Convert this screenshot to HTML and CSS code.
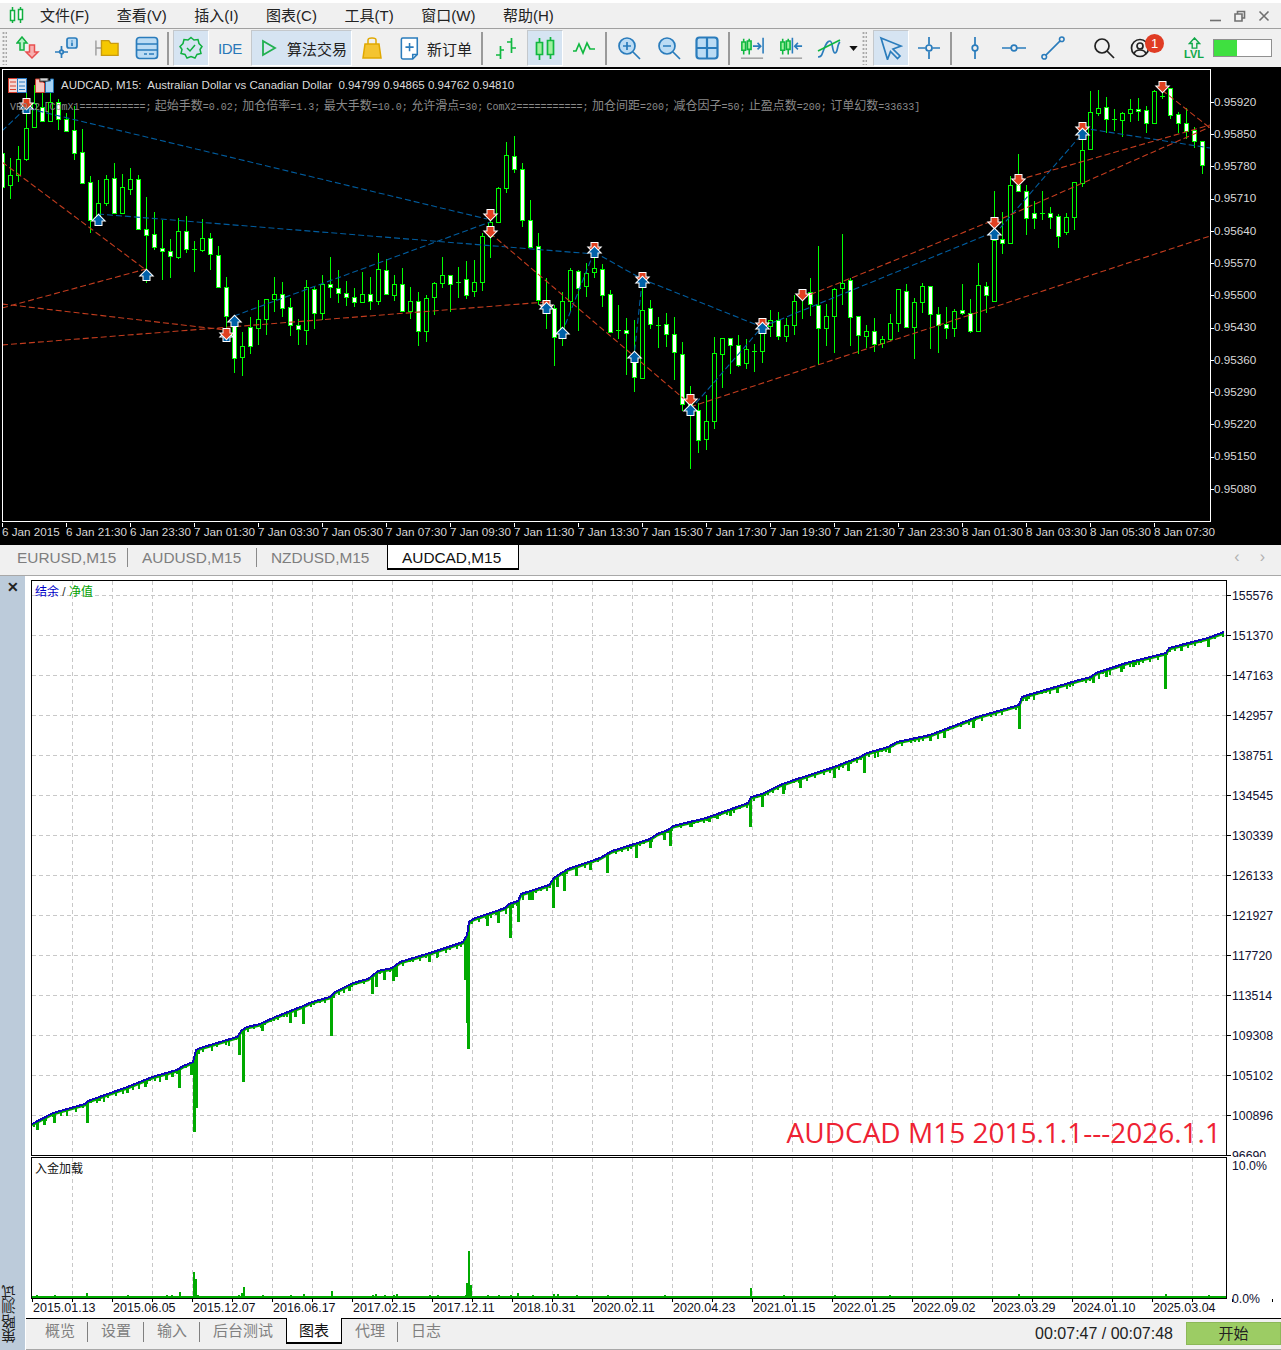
FILE: index.html
```html
<!DOCTYPE html>
<html lang="zh">
<head>
<meta charset="utf-8">
<title>MetaTrader</title>
<link rel="stylesheet" href="styles.css">
</head>
<body>
<header class="menubar">
  <svg class="app-icon" viewBox="0 0 15 18"><path class="s-green" d="M3.5 1v16M11.5 1v16"/><path class="s-green f-white" d="M1.5 4.500h4v10h-4zM9.500 3.500h4v10h-4z"/></svg>
  <nav class="menu"><span>文件(F)</span><span>查看(V)</span><span>插入(I)</span><span>图表(C)</span><span>工具(T)</span><span>窗口(W)</span><span>帮助(H)</span></nav>
  <div class="winctl">
    <svg viewBox="0 0 12 12"><path class="s-win" d="M0 10.500h11"/></svg>
    <svg viewBox="0 0 12 12"><path class="s-win" d="M1 4h7v7H1zM3.500 4V1.500h7v6.500H8"/></svg>
    <svg viewBox="0 0 12 12"><path class="s-win" d="M1.500 1.500l9 9M10.500 1.500l-9 9"/></svg>
  </div>
</header>

<div class="toolbar">
  <i class="grip"></i>
  <button class="tb w39"><svg viewBox="0 0 24 24"><path class="s-green f-lgreen" d="M6 1L1 7h3v7h4V7h3z"/><path class="s-red f-lred" d="M16 22l-6-6h3.500V9h5v7H22z"/></svg></button>
  <button class="tb w40"><svg viewBox="0 0 24 24"><rect class="s-blue f-lblue" x="12" y="2" width="10" height="10" rx="2"/><path class="s-blue" d="M17 4.500v1M17 6.500v3.500M0 16h13M6.500 10v12"/><circle class="s-blue f-grey" cx="6.500" cy="16" r="1.800"/></svg></button>
  <button class="tb w40"><svg viewBox="0 0 26 24"><path class="s-grey" d="M1 4v16M1 12h6"/><path class="s-gold f-gold" d="M7 4h8l2 3h8v13H7z"/></svg></button>
  <button class="tb w39"><svg viewBox="0 0 24 24"><rect class="s-blue f-lblue" x="1.500" y="1.500" width="21" height="21" rx="3"/><path class="s-blue" d="M1.500 8h21M1.500 14h21M9 18h3M14 18h5"/></svg></button>
  <i class="sep sep-a"></i>
  <button class="tb w36 on"><svg viewBox="0 0 24 24"><path class="s-green" d="M12 1.500l3 2.500 4-.5 1 4 3 3-2 3 1 4-4 1-2 3.500-4-1.500-4 1.500-2-3.500-4-1 1-4-2-3 3-3 1-4 4 .5z"/><path class="s-green" d="M8 12l3 3 5-6"/></svg></button>
  <button class="tb w42 ide">IDE</button>
  <button class="tb w101 on algo"><svg viewBox="0 0 16 18"><path class="s-play" d="M2 2l12 7-12 7z"/></svg><span>算法交易</span></button>
  <button class="tb w39"><svg viewBox="0 0 24 24"><path class="s-bag" d="M8 9V4q0-2 4-2t4 2v5"/><path class="s-bag f-bag" d="M5 8h14l2 14H3z"/></svg></button>
  <button class="tb w87 neworder"><svg viewBox="0 0 22 26"><path class="s-blue f-white" d="M3 1.500h16v18l-5 5H3q-1.500 0-1.500-1.500V3Q1.500 1.500 3 1.500z"/><path class="s-blue" d="M14 24.500v-5h5M10.500 7v9M6 11.500h9"/></svg><span>新订单</span></button>
  <i class="sep sep-b"></i>
  <button class="tb w39 m2"><svg viewBox="0 0 24 24"><path class="s-cgreen" d="M6.500 10v13M2 19h4.500M6.500 14H10M17.500 2v15M13 6h4.500M17.500 12H22"/></svg></button>
  <button class="tb w36 on"><svg viewBox="0 0 24 24"><path class="s-cgreen" d="M6.500 2v22M17.500 1v22"/><path class="s-cgreen f-lime" d="M3.500 6.500h6v12h-6zM14.500 4.500h6v14h-6z"/></svg></button>
  <button class="tb w42"><svg viewBox="0 0 24 24"><path class="s-cgreen" d="M1 15h3l3-7 4 9 4-10 3 6h5"/></svg></button>
  <i class="sep sep-c"></i>
  <button class="tb w40"><svg viewBox="0 0 24 24"><circle class="s-blue f-lblue" cx="10" cy="10" r="8"/><path class="s-blue" d="M16 16l7 7M6 10h8M10 6v8"/></svg></button>
  <button class="tb w39"><svg viewBox="0 0 24 24"><circle class="s-blue f-lblue" cx="10" cy="10" r="8"/><path class="s-blue" d="M16 16l7 7M6 10h8"/></svg></button>
  <button class="tb w38"><svg viewBox="0 0 24 24"><rect class="s-blue2 f-lblue" x="1.500" y="1.500" width="21" height="21" rx="3"/><path class="s-blue2" d="M12 1.500v21M1.500 12h21"/></svg></button>
  <i class="sep sep-d"></i>
  <button class="tb w40"><svg viewBox="0 0 26 26"><path class="s-cgreen" d="M4 3v17M10 3v17"/><path class="s-cgreen f-lime" d="M2 6.500h4v9H2zM8 5.500h4v9H8z"/><path class="s-blue" d="M14 11h8M19 7.500l3.500 3.500-3.500 3.500M25 2v17"/><path class="s-grey" d="M1 24h24"/></svg></button>
  <button class="tb w38"><svg viewBox="0 0 26 26"><path class="s-cgreen" d="M4 3v17M10 3v17"/><path class="s-cgreen f-lime" d="M2 6.500h4v9H2zM8 5.500h4v9H8z"/><path class="s-blue" d="M25 11h-8M20.500 7.500L17 11l3.500 3.500M14.500 2v17"/><path class="s-grey" d="M1 24h24"/></svg></button>
  <button class="tb w38"><svg viewBox="0 0 24 24"><path class="s-blue" d="M1 21c4 0 4-3 6-8s3-8 6-8 2 12 5 12 2-9 5-11"/><path class="s-cgreen" d="M1 15l22-11"/></svg></button>
  <button class="tb w11"><svg class="drop" viewBox="0 0 10 6"><path class="f-black" d="M0 0h10L5 6z"/></svg></button>
  <i class="grip grip-b"></i>
  <button class="tb w36 on"><svg viewBox="0 0 24 24"><path class="s-blue" d="M2 2l20 8-8 3 7 7-2.500 2.500-7-7-3 8z"/></svg></button>
  <button class="tb w40"><svg viewBox="0 0 24 24"><path class="s-blue" d="M1 12h7.500M15.500 12H23M12 1v7.500M12 15.500V23"/><circle class="s-blue" cx="12" cy="12" r="3"/></svg></button>
  <i class="sep sep-e"></i>
  <button class="tb w40"><svg viewBox="0 0 24 24"><path class="s-blue" d="M12 1v8M12 15v8"/><circle class="s-blue" cx="12" cy="12" r="2.800"/></svg></button>
  <button class="tb w38"><svg viewBox="0 0 24 24"><path class="s-blue" d="M0 12h9M15 12h9"/><circle class="s-blue" cx="12" cy="12" r="2.800"/></svg></button>
  <button class="tb w40"><svg viewBox="0 0 26 26"><path class="s-blue" d="M5 21L21 5"/><circle class="s-blue" cx="3.500" cy="22.500" r="2.500"/><circle class="s-blue" cx="22.500" cy="3.500" r="2.500"/></svg></button>
  <button class="tb w38 ml12"><svg viewBox="0 0 24 24"><circle class="s-black" cx="10" cy="10" r="7"/><path class="s-black" d="M15 15l7 7"/></svg></button>
  <button class="tb w40 acct"><svg viewBox="0 0 24 24"><circle class="s-black" cx="11" cy="12" r="8.500"/><circle class="s-black" cx="11" cy="10" r="3"/><path class="s-black" d="M5 18q1-4 6-4t6 4"/></svg><b class="badge">1</b></button>
  <button class="tb w38 ml12 lvl"><svg viewBox="0 0 14 13"><path class="s-lvl" d="M7 1L1.500 7H4.500v5h5V7h3z"/></svg><span>LVL</span></button>
  <div class="meter"><div class="meter-fill"></div></div>
</div>

<main class="chart">
  <div class="plot">
    <svg id="plot" class="plot-svg" viewBox="3 70 1207 451">
      <defs>
        <g id="ar-up"><path class="ar ar-b" d="M0-5.500L5.500 0H3V4.500H-3V0H-5.500z"/></g>
        <g id="ar-dn"><path class="ar ar-r" d="M0 5.500L5.500 0H3V-4.500H-3V0H-5.500z"/></g>
      </defs>
      <path id="wicks" class="wick"/>
      <path id="hollow" class="body-h"/>
      <path id="solid" class="body-w"/>
      <path id="doji" class="wick"/>
      <path class="dash-b" d="M2 131L26 108L487 219M98 214L594 254M234 316L490 222M562 333L594 252M594 252L642 279L762 327M642 282L634 357M690 410L762 327M762 327L994 232M994 235L1082 134M1082 128L1210 148"/>
      <path class="dash-r" d="M2 162L146 270M2 308L146 269M2 304L226 330M2 345L546 302M490 233L690 404M690 407L1210 236M802 298L994 220M1018 180L1210 125M994 222L1210 127M1162 90L1210 128"/>
      <g id="arrows"></g>
    </svg>
    <div class="plot-title">
      <svg class="pi" viewBox="0 0 19 15"><rect class="pi-red" x=".5" y=".5" width="9" height="14"/><rect class="pi-blue" x="9.500" y=".5" width="9" height="14"/><path class="pi-r" d="M2 4h6M2 8h6M2 11.500h6"/><path class="pi-b" d="M11 4h6M11 8h6M11 11.500h6"/></svg>
      <svg class="pi pi2" viewBox="0 0 19 15"><path class="f-pink" d="M.5 1h4v3h3l2 1v9.500H.5z"/><path class="f-sky" d="M10.500 4l2-1h3V1h3v13.500h-8z"/><rect class="f-wgrey" x="5" y="0" width="8" height="3"/></svg>
      <span>AUDCAD, M15:&nbsp; Australian Dollar vs Canadian Dollar&nbsp; 0.94799 0.94865 0.94762 0.94810</span>
    </div>
    <div class="plot-note">VR9.2 [ComX1===========; <b>起始手数</b>=0.02; <b>加仓倍率</b>=1.3; <b>最大手数</b>=10.0; <b>允许滑点</b>=30; ComX2===========; <b>加仓间距</b>=200; <b>减仓因子</b>=50; <b>止盈点数</b>=200; <b>订单幻数</b>=33633]</div>
  </div>
  <div class="prices"><span>0.95920</span><span>0.95850</span><span>0.95780</span><span>0.95710</span><span>0.95640</span><span>0.95570</span><span>0.95500</span><span>0.95430</span><span>0.95360</span><span>0.95290</span><span>0.95220</span><span>0.95150</span><span>0.95080</span></div>
  <div class="times"><span>6 Jan 2015</span><span>6 Jan 21:30</span><span>6 Jan 23:30</span><span>7 Jan 01:30</span><span>7 Jan 03:30</span><span>7 Jan 05:30</span><span>7 Jan 07:30</span><span>7 Jan 09:30</span><span>7 Jan 11:30</span><span>7 Jan 13:30</span><span>7 Jan 15:30</span><span>7 Jan 17:30</span><span>7 Jan 19:30</span><span>7 Jan 21:30</span><span>7 Jan 23:30</span><span>8 Jan 01:30</span><span>8 Jan 03:30</span><span>8 Jan 05:30</span><span>8 Jan 07:30</span></div>
</main>

<div class="symtabs">
  <span class="symtab">EURUSD,M15</span><span class="symtab">AUDUSD,M15</span><span class="symtab nosep">NZDUSD,M15</span><span class="symtab active">AUDCAD,M15</span>
  <div class="symnav"><span>‹</span><span>›</span></div>
</div>

<section class="tester">
  <aside class="side"><span class="close">✕</span><span class="side-title">策略测试</span></aside>
  <div class="tester-main">
    <div class="graph">
      <div class="row row-main">
        <div class="pane pane-main">
          <svg class="pane-svg" viewBox="32 581 1194 574">
            <defs><clipPath id="under"><polygon id="underpoly"/></clipPath></defs>
            <path id="grid1" class="grid"/>
            <g clip-path="url(#under)">
              <path id="teeth" class="teeth"/>
              <path id="spikes" class="spike"/>
              <polyline id="eq" class="eq"/>
            </g>
            <polyline id="bal" class="bal"/>
          </svg>
          <div class="legend"><span class="lg-b">结余</span> <span class="lg-s">/</span> <span class="lg-g">净值</span></div>
          <div class="wm">AUDCAD M15 2015.1.1---2026.1.1</div>
        </div>
        <div class="yaxis"><span>155576</span><span>151370</span><span>147163</span><span>142957</span><span>138751</span><span>134545</span><span>130339</span><span>126133</span><span>121927</span><span>117720</span><span>113514</span><span>109308</span><span>105102</span><span>100896</span><span>96690</span></div>
      </div>
      <div class="row row-load">
        <div class="pane pane-load">
          <svg class="pane-svg" viewBox="32 1158 1194 140">
            <path id="grid2" class="grid"/>
            <path id="load" class="loadbar"/>
            <path class="loadbase" d="M32 1297H1226"/>
          </svg>
          <div class="legend legend-k">入金加载</div>
        </div>
        <div class="yaxis2"><span>10.0%</span><span>0.0%</span></div>
      </div>
      <div class="dates"><span>2015.01.13</span><span>2015.06.05</span><span>2015.12.07</span><span>2016.06.17</span><span>2017.02.15</span><span>2017.12.11</span><span>2018.10.31</span><span>2020.02.11</span><span>2020.04.23</span><span>2021.01.15</span><span>2022.01.25</span><span>2022.09.02</span><span>2023.03.29</span><span>2024.01.10</span><span>2025.03.04</span></div>
    </div>
    <footer class="bottom">
      <div class="btabs"><span class="btab">概览</span><span class="btab">设置</span><span class="btab">输入</span><span class="btab nosep">后台测试</span><span class="btab active">图表</span><span class="btab">代理</span><span class="btab nosep">日志</span></div>
      <div class="timer">00:07:47 / 00:07:48</div>
      <button class="start">开始</button>
    </footer>
  </div>
</section>
<script src="charts.js"></script>
</body>
</html>
```
FILE: styles.css
```css
* { box-sizing: border-box; }
html, body { margin: 0; padding: 0; background: #fff; }
body { width: 1281px; height: 1350px; overflow: hidden; font-family: "Liberation Sans", "Noto Sans CJK SC", sans-serif; color: #222; }
svg { display: block; }

.menubar { margin-top: 3px; height: 26px; background: #f0f0f0; border-bottom: 1px solid #a0a0a0; display: flex; align-items: center; padding-left: 9px; }
.app-icon { width: 15px; height: 18px; margin-right: 16px; margin-bottom: 2px; }
.menu { display: flex; gap: 27.600px; font-size: 15px; color: #222; padding-bottom: 2px; }
.winctl { margin-left: auto; display: flex; gap: 12px; padding-right: 11px; }
.winctl svg { width: 12px; height: 12px; }
.s-win { fill: none; stroke: #707070; stroke-width: 1.6; }

.toolbar { height: 38px; background: #f0f0f0; display: flex; align-items: stretch; }
.grip { width: 5px; margin: 2px 1px 2px 2px; background: radial-gradient(circle, #a8a8a8 1px, transparent 1.2px) 0 0 / 3px 4px; }
.grip-b { margin: 2px 6px 2px 3px; }
.tb { flex: none; padding: 0; margin: 1px 0; border: 0; background: none; display: flex; align-items: center; justify-content: center; font: inherit; color: #222; position: relative; }
.tb svg { width: 24px; height: 24px; }
.tb.on { background: #d6e4f2; border: 1px solid #c4c8cc; border-right-color: #fff; border-bottom-color: #fff; }
.w11 { width: 11px; } .w36 { width: 36px; } .w38 { width: 38px; } .w39 { width: 39px; } .w40 { width: 40px; } .w42 { width: 42px; } .w87 { width: 87px; } .w101 { width: 101px; }
.m2 { margin-right: 2px; }
.ml12 { margin-left: 12px; }
.sep { flex: none; width: 2px; margin: 3px 0 2px; background: #9a9a9a; }
.sep-a { margin-left: 1px; margin-right: 4px; }
.sep-b { margin-left: 3px; margin-right: 3px; }
.sep-c { margin-left: 0; margin-right: 2px; }
.sep-d { margin-left: 2px; margin-right: 2px; }
.sep-e { margin-left: 1px; margin-right: 3px; }
.ide { font-size: 15px; color: #2a78b8; letter-spacing: -.3px; }
.algo { justify-content: flex-start; padding-left: 9px; font-size: 15px; }
.algo svg { width: 16px; height: 18px; margin-right: 10px; }
.neworder { justify-content: flex-start; padding-left: 9px; font-size: 15px; }
.neworder svg { width: 20px; height: 25px; margin-right: 7px; }
.tb .drop { width: 9px; height: 5px; }
.acct svg { width: 24px; height: 24px; margin-right: 4px; }
.badge { position: absolute; left: 22px; top: 4px; width: 19px; height: 19px; border-radius: 50%; background: #e03c24; color: #fff; font-weight: normal; font-size: 13px; line-height: 19px; text-align: center; }
.lvl { flex-direction: column; font-size: 11px; font-weight: bold; color: #10a848; line-height: 11px; }
.tb.lvl svg { width: 13px; height: 12px; }
.meter { flex: none; width: 59px; height: 18px; align-self: center; margin-top: 0; border: 1px solid #909090; background: #fff; }
.meter-fill { width: 40%; height: 100%; background: #3fe040; }

.s-green, .s-red, .s-blue, .s-blue2, .s-grey, .s-gold, .s-bag, .s-cgreen, .s-black, .s-play, .s-lvl { fill: none; stroke-width: 1.500; }
.s-green { stroke: #10b040; }
.s-cgreen { stroke: #10b840; stroke-width: 1.700; }
.s-play { stroke: #20b050; stroke-width: 1.800; }
.s-red { stroke: #e85050; }
.s-blue { stroke: #2a7cbc; stroke-width: 1.700; }
.s-blue2 { stroke: #2a7cbc; stroke-width: 2.200; }
.s-grey { stroke: #9a9a9a; }
.s-gold { stroke: #c89a10; }
.s-bag { stroke: #e0a800; }
.s-black { stroke: #222; stroke-width: 1.700; }
.s-lvl { stroke: #10a848; }
.f-white { fill: #fff; }
.f-lgreen { fill: #b8f0c8; }
.f-lred { fill: #f8b0b0; }
.f-lblue { fill: #bcdcf4; }
.f-gold { fill: #f6c800; }
.f-bag { fill: #f4c430; }
.f-lime { fill: #a0f0a0; }
.f-grey { fill: #c8d8e8; }
.f-black { fill: #111; }
.f-pink { fill: #f8c8c0; stroke: #d04030; stroke-width: 1; }
.f-sky { fill: #a8d4f4; stroke: #2070b0; stroke-width: 1; }
.f-wgrey { fill: #d8d8d8; stroke: #555; stroke-width: 1; }

.chart { height: 478px; background: #000; display: grid; grid-template-columns: 1211px 70px; grid-template-rows: 455px 23px; overflow: hidden; padding-top: 2px; }
.plot { position: relative; margin-left: 2px; border: 1px solid #fff; width: 1209px; height: 453px; }
.plot-svg { width: 1207px; height: 451px; }
.wick { fill: none; stroke: #00ff00; stroke-width: 1; shape-rendering: crispEdges; }
.body-h { fill: #000; stroke: #00ff00; stroke-width: 1; shape-rendering: crispEdges; }
.body-w { fill: #fff; stroke: #00ff00; stroke-width: 1; shape-rendering: crispEdges; }
.dash-b { fill: none; stroke: #005c9e; stroke-width: 1.100; stroke-dasharray: 6 3; }
.dash-r { fill: none; stroke: #c23c1e; stroke-width: 1.100; stroke-dasharray: 6 3; }
.ar { stroke: #fff; stroke-width: 2; paint-order: stroke; stroke-linejoin: miter; }
.ar-b { fill: #0060a8; }
.ar-r { fill: #e04020; }
.plot-title { position: absolute; left: 5px; top: 7px; height: 16px; display: flex; align-items: center; color: #dcdcdc; font-size: 11.500px; white-space: pre; }
.pi { width: 19px; height: 15px; margin-right: 8px; }
.pi2 { margin-right: 7px; }
.pi-red { fill: #f4d8d4; stroke: #d84030; }
.pi-blue { fill: #d4e4f4; stroke: #2878c0; }
.pi-r { stroke: #d84030; stroke-width: 1; fill: none; }
.pi-b { stroke: #2878c0; stroke-width: 1; fill: none; }
.plot-note { position: absolute; left: 7px; top: 28px; font: 10px/14px "Liberation Mono", "Noto Sans CJK SC", monospace; color: #8a8a8a; white-space: pre; word-spacing: -2.600px; }
.plot-note b { font: 12px/14px "Noto Sans CJK SC", sans-serif; }

.prices { display: flex; flex-direction: column; padding-top: 16.700px; color: #d8d8d8; font-size: 11.700px; grid-row: 1; grid-column: 2; }
.prices span { flex: none; height: 32.250px; line-height: 32.250px; padding-left: 3px; position: relative; margin-top: 0; }
.prices span::before { content: ""; position: absolute; left: -1px; top: 50%; width: 4px; height: 1px; background: #fff; }
.times { grid-column: 1 / 3; display: flex; padding-left: 2px; font-size: 11.700px; color: #d8d8d8; }
.times span { flex: none; width: 64px; height: 21px; padding-top: 1px; line-height: 14px; white-space: nowrap; position: relative; }
.times span::before { content: ""; position: absolute; left: 0; top: -1px; width: 1px; height: 4px; background: #fff; }

.symtabs { height: 31px; background: #f0f0f0; border-bottom: 1px solid #a8a8a8; display: flex; padding-left: 3px; font-size: 15.400px; }
.symtab { flex: none; width: 129px; height: 25px; padding-left: 14px; line-height: 26px; color: #7e7e7e; position: relative; white-space: nowrap; }
.symtab:first-child { width: 125px; }
.symtab.nosep { width: 130px; }
.symtab::after { content: ""; position: absolute; right: 0; top: 3px; bottom: 3px; width: 1px; background: #8a8a8a; }
.symtab.nosep::after, .symtab.active::after, .btab.nosep::after, .btab.active::after { display: none; }
.symtab.active { background: #fff; color: #111; border: 1px solid #000; border-top: 0; border-bottom-width: 2px; padding-left: 14px; width: 132px; }
.symnav { margin-left: auto; display: flex; gap: 20px; padding: 0 16px 6px 0; color: #b0b0b0; font-size: 16px; align-items: center; }

.tester { height: 774px; display: flex; }
.side { flex: none; width: 25px; background: #bccbda; display: flex; flex-direction: column; justify-content: space-between; align-items: center; padding-bottom: 7px; }
.close { font-size: 14px; font-weight: bold; color: #222; line-height: 22px; margin-left: 1px; }
.side-title { writing-mode: vertical-rl; transform: rotate(180deg); font-size: 14.500px; line-height: 18px; margin-right: 6px; color: #222; }
.tester-main { flex: 1; min-width: 0; display: flex; flex-direction: column; }
.graph { padding: 4px 0 0 6px; height: 742px; }
.row { display: flex; }
.row-main { height: 577px; overflow: hidden; }
.row-load { height: 142px; }
.pane { flex: none; width: 1196px; border: 1px solid #000; position: relative; }
.pane-main { height: 576px; }
.pane-load { height: 142px; }
.pane-svg { width: 1194px; height: 100%; }
.grid { fill: none; stroke: #c8c8c8; stroke-width: 1; stroke-dasharray: 4 3; shape-rendering: crispEdges; }
.spike { fill: none; stroke: #00aa00; stroke-width: 3; shape-rendering: crispEdges; }
.teeth { fill: none; stroke: #00aa00; stroke-width: 2; shape-rendering: crispEdges; }
.eq { fill: none; stroke: #00aa00; stroke-width: 3; }
.bal { fill: none; stroke: #1008b8; stroke-width: 2; shape-rendering: crispEdges; }
.loadbar { fill: none; stroke: #00aa00; stroke-width: 2; shape-rendering: crispEdges; }
.loadbase { fill: none; stroke: #00aa00; stroke-width: 2; shape-rendering: crispEdges; }
.legend { position: absolute; left: 3px; top: 3px; font-size: 12px; line-height: 17px; }
.legend-k { color: #111; }
.lg-b { color: #0000c8; } .lg-g { color: #00a000; } .lg-s { color: #333; }
.wm { position: absolute; right: 5px; bottom: 3px; font-family: "Open Sans", sans-serif; font-size: 28px; line-height: 40px; color: #ee2233; white-space: nowrap; }
.yaxis { flex: none; width: 55px; margin-top: -4px; font-size: 12.300px; color: #101030; }
.yaxis span { display: block; height: 40px; line-height: 40px; padding-left: 5px; position: relative; }
.yaxis span::before { content: ""; position: absolute; left: 0; top: 19px; width: 4px; height: 1px; background: #000; }
.yaxis2 { flex: none; width: 55px; padding-left: 5px; padding-top: 1px; height: 150px; display: flex; flex-direction: column; justify-content: space-between; font-size: 12.300px; line-height: 16px; color: #101030; }
.dates { height: 19px; display: flex; padding-left: 2px; font-size: 12.500px; color: #101020; background: repeating-linear-gradient(90deg, #000 0 1px, transparent 1px 40px) 1px 0 / 100% 3px no-repeat; }
.dates span { flex: none; width: 80px; padding-top: 1px; line-height: 16px; }

.bottom { height: 30px; margin-left: 1px; border-top: 1px solid #000; border-bottom: 1px solid #a8a8a8; background: #f0f0f0; display: flex; align-items: flex-start; box-sizing: content-box; }
.btabs { display: flex; padding-left: 6px; font-size: 15px; }
.btab { width: 56px; height: 25px; line-height: 24px; text-align: center; color: #808080; position: relative; }
.btab.nosep { width: auto; padding: 0 13px; }
.btab::after { content: ""; position: absolute; right: 0; top: 3px; bottom: 2px; width: 1px; background: #808080; }
.btab.active { width: 56px; background: #fff; color: #111; border: 1px solid #000; border-top: 0; border-bottom-width: 2px; height: 26px; margin-top: -1px; padding-top: 1px; }
.timer { margin-left: auto; font-size: 16px; line-height: 29px; color: #222; margin-top: 0; }
.start { flex: none; width: 95px; height: 23px; margin: 3px 0 0 13px; padding: 0 0 2px; background: #9ccc64; border: 1px solid #8cb858; font: 15px/18px "Noto Sans CJK SC", sans-serif; color: #222; }
```
FILE: charts.js
```js
// Candle data in plot pixels: x, top, bottom of body / x, high, low of wick.
var WICKS = [[2,140,195],[10,158,199],[18,146,182],[26,85,161],[34,85,127],[42,93,121],[50,89,121],[58,99,130],[66,113,131],[74,106,160],[82,129,183],[90,176,233],[98,180,223],[106,175,206],[114,163,213],[122,174,213],[130,168,195],[138,175,229],[146,197,283],[154,212,250],[162,220,280],[170,239,278],[178,218,259],[186,216,253],[194,241,272],[202,219,252],[210,233,270],[218,246,288],[226,277,340],[234,315,373],[242,332,376],[250,317,354],[258,300,345],[266,299,335],[274,277,312],[282,282,317],[290,298,336],[298,319,345],[306,280,345],[314,287,329],[322,275,320],[330,257,298],[338,270,303],[346,281,306],[354,288,307],[362,272,302],[370,277,310],[378,253,305],[386,259,294],[394,275,301],[402,268,311],[410,287,319],[418,292,346],[426,295,342],[434,282,315],[442,257,288],[450,275,312],[458,267,298],[466,261,299],[474,260,297],[482,233,291],[490,220,258],[498,187,222],[506,142,193],[514,136,173],[522,163,227],[530,200,247],[538,233,305],[546,278,329],[554,305,366],[562,292,346],[570,268,312],[578,270,331],[586,263,297],[594,253,278],[602,264,307],[610,290,332],[618,305,339],[626,318,375],[634,320,392],[642,287,378],[650,300,329],[658,317,348],[666,313,347],[674,317,380],[682,342,411],[690,386,469],[698,403,453],[706,395,450],[714,337,429],[722,338,388],[730,338,374],[738,335,367],[746,339,369],[754,344,372],[762,320,363],[770,310,337],[778,312,340],[786,318,342],[794,295,335],[802,297,319],[810,278,316],[818,246,365],[826,304,346],[834,288,353],[842,234,305],[850,278,346],[858,316,354],[866,325,348],[874,318,352],[882,336,348],[890,314,341],[898,289,332],[906,284,327],[914,298,359],[922,283,313],[930,286,349],[938,307,353],[946,307,339],[954,309,337],[962,284,315],[970,299,333],[978,263,331],[986,282,313],[994,191,301],[1002,212,254],[1010,176,243],[1018,154,191],[1026,185,235],[1034,201,229],[1042,191,220],[1050,207,229],[1058,214,248],[1066,213,235],[1074,182,230],[1082,125,187],[1090,91,149],[1098,90,116],[1106,97,133],[1114,109,131],[1122,112,137],[1130,99,122],[1138,98,121],[1146,106,133],[1154,90,123],[1162,90,99],[1170,88,119],[1178,112,133],[1186,108,139],[1194,127,148],[1202,141,174]];
var HOLLOW = [[10,175,185],[18,159,175],[26,128,159],[34,103,127],[50,102,121],[98,203,216],[106,179,203],[122,187,213],[130,179,189],[178,231,257],[202,238,250],[242,346,357],[258,319,328],[266,299,319],[274,294,299],[306,287,330],[322,284,313],[362,294,302],[378,269,301],[394,284,295],[410,301,311],[426,298,331],[434,283,297],[442,275,283],[474,282,291],[482,236,282],[490,222,236],[498,188,222],[506,155,188],[562,301,337],[570,270,301],[586,273,286],[594,268,272],[642,310,378],[706,421,439],[714,353,421],[722,338,354],[746,349,363],[762,332,351],[770,320,326],[786,325,336],[794,301,325],[826,316,328],[834,289,316],[842,283,288],[866,331,336],[882,339,343],[890,323,339],[898,289,323],[914,302,327],[922,286,302],[954,311,328],[978,285,331],[994,240,301],[1010,185,243],[1066,217,232],[1074,182,217],[1082,150,183],[1090,112,149],[1098,108,113],[1122,113,120],[1130,109,113],[1154,91,123]];
var SOLID = [[2,153,187],[42,107,121],[58,102,119],[66,119,131],[74,130,153],[82,152,183],[90,182,220],[114,178,213],[138,179,229],[146,229,235],[154,234,247],[162,248,251],[170,251,256],[186,231,249],[210,238,254],[218,255,287],[226,287,316],[234,325,358],[250,327,346],[282,294,308],[290,307,325],[298,325,329],[314,289,313],[330,284,287],[338,288,293],[346,293,297],[354,297,302],[370,294,301],[386,270,294],[402,284,311],[418,301,331],[450,275,284],[466,279,295],[514,156,169],[522,169,220],[530,220,247],[538,246,300],[546,300,313],[554,308,337],[578,271,288],[602,269,295],[610,294,332],[626,330,333],[634,362,377],[650,308,324],[666,324,334],[674,334,352],[682,354,404],[690,400,408],[698,410,440],[730,338,345],[738,345,365],[778,320,336],[810,292,304],[818,305,328],[850,280,317],[858,316,335],[874,331,344],[906,291,327],[930,286,314],[938,314,325],[946,324,328],[962,310,313],[970,313,331],[986,286,295],[1002,239,243],[1018,185,191],[1026,191,218],[1034,213,218],[1050,213,217],[1058,216,236],[1106,107,119],[1138,109,111],[1146,110,123],[1170,88,115],[1178,114,123],[1186,123,131],[1194,130,141],[1202,141,165]];
var DOJI = [[194,249],[458,282],[618,330],[658,325],[754,351],[802,297],[1042,213],[1114,119],[1162,96]];
var UP = [[26,108],[98,220],[146,275],[226,336],[234,321],[546,308],[562,333],[594,252],[634,357],[642,282],[690,410],[762,328],[994,234],[1082,134]];
var DOWN = [[26,103],[226,333],[490,214],[490,231],[546,305],[594,247],[642,277],[690,399],[762,323],[802,294],[994,222],[1018,179],[1082,127],[1162,86]];

var BAL = [[32,1124],[53,1113],[85,1104],[88,1101],[130,1086],[152,1077],[177,1070],[183,1066],[193,1062],[196,1050],[200,1048],[237,1037],[242,1030],[247,1027],[260,1024],[275,1017],[303,1006],[312,1002],[330,997],[335,992],[353,983],[368,979],[378,971],[392,968],[400,962],[430,953],[463,942],[467,935],[469,922],[473,919],[505,908],[509,904],[518,901],[521,894],[549,885],[554,878],[558,875],[568,869],[600,858],[612,851],[631,845],[650,839],[657,834],[668,830],[673,826],[706,818],[748,803],[751,797],[762,794],[780,785],[794,780],[834,767],[860,757],[867,753],[888,747],[897,742],[930,735],[977,717],[1019,705],[1022,697],[1028,695],[1079,680],[1091,677],[1096,673],[1126,663],[1166,653],[1169,648],[1208,638],[1224,632]];
var SPIKES = [[37,1130],[44,1125],[54,1123],[87,1123],[99,1101],[127,1093],[145,1087],[166,1080],[172,1077],[179,1088],[191,1075],[194,1132],[196,1108],[239,1055],[243,1082],[262,1031],[290,1023],[295,1017],[303,1024],[331,1036],[349,991],[372,994],[376,987],[384,980],[393,981],[396,977],[429,962],[437,957],[465,980],[467,1023],[468,1049],[487,926],[498,923],[510,938],[518,922],[529,900],[532,900],[553,908],[557,887],[564,891],[576,876],[590,870],[607,873],[636,858],[650,848],[664,840],[670,846],[691,827],[709,822],[717,819],[730,816],[750,827],[762,807],[783,794],[800,788],[834,778],[848,771],[864,773],[889,753],[930,741],[944,738],[973,728],[1019,729],[1026,701],[1057,693],[1093,683],[1106,677],[1121,672],[1133,667],[1165,689],[1181,651],[1208,647],[1223,637]];
var LOAD = [[36,1295],[54,1295],[86,1293],[127,1295],[166,1295],[171,1295],[179,1292],[193,1272],[195,1279],[197,1295],[238,1295],[241,1293],[243,1287],[262,1295],[290,1295],[303,1294],[331,1291],[372,1295],[375,1294],[384,1295],[393,1295],[396,1294],[429,1295],[437,1295],[465,1295],[466,1283],[468,1251],[470,1285],[487,1295],[498,1295],[510,1295],[517,1293],[532,1295],[553,1294],[557,1294],[576,1295],[607,1295],[664,1295],[750,1288],[783,1295],[834,1295],[889,1295],[972,1296],[1018,1294],[1165,1294],[1208,1295]];

function pts(a, dy) { return a.map(function (p) { return p[0] + ',' + (p[1] + (dy || 0)); }).join(' '); }
function body(b) { return 'M' + (b[0] - 2 + .5) + ' ' + (b[1] + .5) + 'h4V' + (b[2] + .5) + 'h-4z'; }
function vline(w) { return 'M' + (w[0] + .5) + ' ' + w[1] + 'V' + w[2]; }
function set(id, attr, v) { document.getElementById(id).setAttribute(attr, v); }
function balAt(x) {
  for (var k = 1; k < BAL.length; k++) {
    if (x <= BAL[k][0]) {
      var a = BAL[k - 1], b = BAL[k];
      return a[1] + (b[1] - a[1]) * (x - a[0]) / (b[0] - a[0]);
    }
  }
  return BAL[BAL.length - 1][1];
}

set('wicks', 'd', WICKS.map(vline).join(''));
set('hollow', 'd', HOLLOW.map(body).join(''));
set('solid', 'd', SOLID.map(body).join(''));
set('doji', 'd', DOJI.map(function (d) { return 'M' + (d[0] - 2) + ' ' + (d[1] + .5) + 'h5'; }).join(''));

var g = document.getElementById('arrows'), NS = 'http://www.w3.org/2000/svg';
function place(list, ref) {
  list.forEach(function (p) {
    var u = document.createElementNS(NS, 'use');
    u.setAttribute('href', ref);
    u.setAttribute('transform', 'translate(' + (p[0] + .5) + ' ' + (p[1] + .5) + ')');
    g.appendChild(u);
  });
}
place(UP.slice(0, 5), '#ar-up');
place(DOWN, '#ar-dn');
place(UP.slice(5), '#ar-up');

var g1 = '', g2 = '', i;
for (i = 72; i < 1226; i += 40) { g1 += 'M' + (i + .5) + ' 581V1155'; g2 += 'M' + (i + .5) + ' 1158V1296'; }
for (i = 595; i < 1155; i += 40) { g1 += 'M32 ' + (i + .5) + 'H1226'; }
set('grid1', 'd', g1);
set('grid2', 'd', g2);

// Small equity dips along the balance line (deterministic sequence).
var seed = 7, teeth = '', x = 34, r, y;
while (x < 1224) {
  seed = (seed * 137 + 71) % 1009;
  r = seed % 10;
  y = Math.round(balAt(x));
  teeth += 'M' + x + ' ' + y + 'V' + (y + 3 + (r > 8 ? 4 : r % 3));
  x += 3 + seed % 7;
}
set('teeth', 'd', teeth);

set('bal', 'points', pts(BAL));
set('eq', 'points', pts(BAL, 1));
set('underpoly', 'points', pts(BAL) + ' 1226,1155 32,1155');
set('spikes', 'd', SPIKES.map(function (s) { return 'M' + s[0] + ' 585V' + s[1]; }).join(''));
set('load', 'd', LOAD.map(function (s) { return 'M' + (s[0] + .5) + ' ' + s[1] + 'V1297'; }).join(''));
```
